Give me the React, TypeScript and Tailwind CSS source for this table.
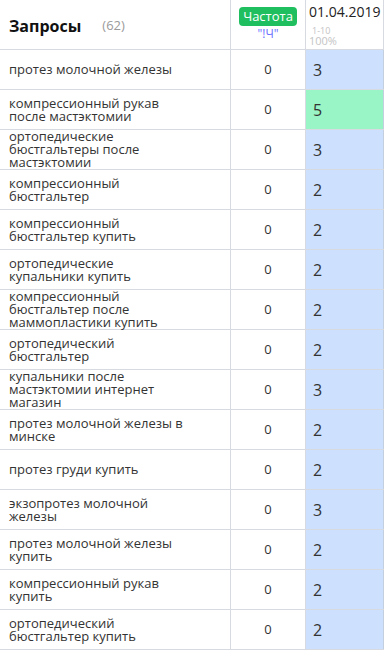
const rows: { q: string; v: number; hot?: boolean }[] = [
  { q: "протез молочной железы", v: 3 },
  { q: "компрессионный рукав после мастэктомии", v: 5, hot: true },
  { q: "ортопедические бюстгальтеры после мастэктомии", v: 3 },
  { q: "компрессионный бюстгальтер", v: 2 },
  { q: "компрессионный бюстгальтер купить", v: 2 },
  { q: "ортопедические купальники купить", v: 2 },
  { q: "компрессионный бюстгальтер после маммопластики купить", v: 2 },
  { q: "ортопедический бюстгальтер", v: 2 },
  { q: "купальники после мастэктомии интернет магазин", v: 3 },
  { q: "протез молочной железы в минске", v: 2 },
  { q: "протез груди купить", v: 2 },
  { q: "экзопротез молочной железы", v: 3 },
  { q: "протез молочной железы купить", v: 2 },
  { q: "компрессионный рукав купить", v: 2 },
  { q: "ортопедический бюстгальтер купить", v: 2 },
];

export default function App() {
  return (
    <div
      className="w-[384px] h-[650px] overflow-hidden bg-white text-[#333]"
      style={{ fontFamily: '"Open Sans", sans-serif' }}
    >
      {/* header */}
      <div className="flex h-[50px] border-b border-[#d7dbe1]">
        <div className="w-[231px] flex items-center pl-[9px] border-r border-[#d7dbe1]">
          <span className="text-[16px] font-bold text-[#111] pt-[2px]">Запросы</span>
          <span className="ml-[21px] text-[13px] text-[#9a9a9a] pt-[2px]">(62)</span>
        </div>
        <div className="w-[75px] flex flex-col items-center pt-[7px] border-r border-[#d7dbe1]">
          <span className="bg-[#1fbf5f] text-white text-[13px] leading-[19px] px-[4px] rounded-[4px]">
            Частота
          </span>
          <span className="text-[12px] leading-[13px] text-[#6b70ff] mt-[1px]">"!Ч"</span>
        </div>
        <div className="w-[78px] flex flex-col pl-[3px] pt-[3px] border-r border-[#d7dbe1]">
          <span className="text-[14px] leading-[17px] text-[#222] whitespace-nowrap">01.04.2019</span>
          <span className="text-[9px] leading-[9px] text-[#c4c4c4] pl-[3px] mt-[6px]">1-10</span>
          <span className="text-[11px] leading-[12px] text-[#c4c4c4]">100%</span>
        </div>
      </div>
      {rows.map((r, i) => (
        <div key={i} className="flex h-[40px] border-b border-[#d7dbe1]">
          <div className="w-[231px] flex items-center pl-[9px] border-r border-[#d7dbe1]">
            <span className="w-[176px] text-[13px] leading-[13px]">{r.q}</span>
          </div>
          <div className="w-[75px] flex items-center justify-center text-[13px] border-r border-[#d7dbe1]">
            0
          </div>
          <div
            className={`w-[78px] flex items-center pl-[7px] text-[16px] border-r border-[#c3cfdf] ${
              r.hot ? "bg-[#99f5c6]" : "bg-[#cde0fd]"
            }`}
          >
            {r.v}
          </div>
        </div>
      ))}
    </div>
  );
}
